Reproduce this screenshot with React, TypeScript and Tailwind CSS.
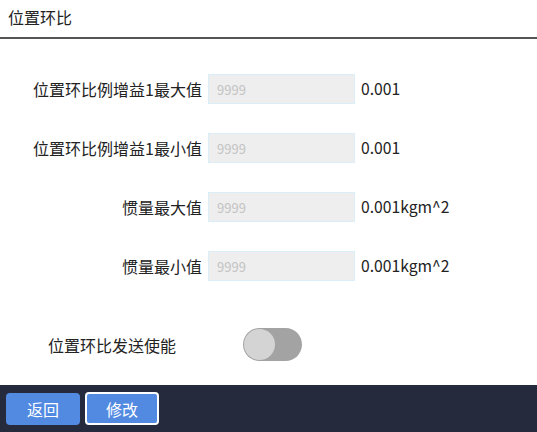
import React from 'react';

const rows = [
  { label: '位置环比例增益1最大值', unit: '0.001' },
  { label: '位置环比例增益1最小值', unit: '0.001' },
  { label: '惯量最大值', unit: '0.001kgm^2' },
  { label: '惯量最小值', unit: '0.001kgm^2' },
];

export default function App() {
  return (
    <div
      className="flex h-[432px] w-[537px] flex-col bg-white text-[#222]"
      style={{ fontFamily: '"Noto Sans CJK SC", "Noto Sans", sans-serif' }}
    >
      <div className="flex h-[39px] items-center border-b-2 border-[#555] px-2 pb-[3px] text-[16px]">
        位置环比
      </div>

      <div className="flex flex-1 flex-col pt-[35px]">
        <div className="flex flex-col gap-[29px]">
          {rows.map((row) => (
            <div key={row.label} className="flex h-[30px] items-center">
              <div className="w-[202px] text-right text-[16px]">{row.label}</div>
              <input
                className="ml-[6px] h-[30px] w-[147px] border border-[#d9eef7] bg-[#eeeeee] px-2 text-[13px] text-[#999] outline-none placeholder:text-[#c4c4c4]"
                placeholder="9999"
                readOnly
              />
              <div className="ml-[6px] text-[15.7px]">{row.unit}</div>
            </div>
          ))}
        </div>

        <div className="mt-[47px] flex h-[33px] items-center">
          <div className="ml-[48px] w-[195px] text-[16px]">位置环比发送使能</div>
          <div className="flex h-[33px] w-[59px] items-center rounded-full bg-[#a3a3a3] px-[1px]">
            <div className="h-[31px] w-[31px] rounded-full bg-[#d4d4d4]" />
          </div>
        </div>
      </div>

      <div className="flex h-[47px] items-start gap-[5px] bg-[#252b3d] px-[6px] pt-[8px]">
        <button className="h-[32px] w-[74px] rounded bg-[#528ae2] text-[16px] text-white">返回</button>
        <button className="h-[33px] w-[74px] -translate-y-px rounded border-2 border-white bg-[#528ae2] text-[16px] text-white">
          修改
        </button>
      </div>
    </div>
  );
}
